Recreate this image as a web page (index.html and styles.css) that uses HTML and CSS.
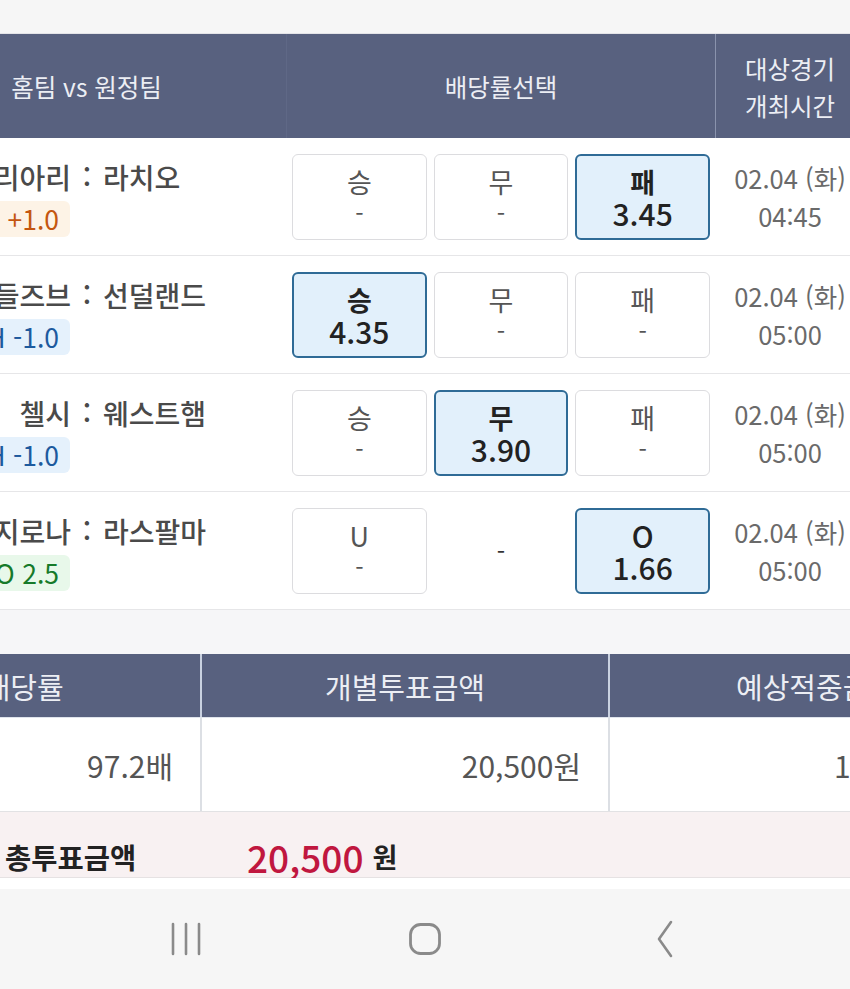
FILE: index.html
```html
<!DOCTYPE html>
<html lang="ko">
<head>
<meta charset="utf-8">
<title>투표 확인</title>
<link rel="stylesheet" href="styles.css">
</head>
<body>
<div class="page">
  <div class="topbar"></div>

  <section class="match-table">
    <div class="mt-head">
      <div class="h-cell h-team">홈팀 vs 원정팀</div>
      <div class="h-cell h-odds">배당률선택</div>
      <div class="h-cell h-time">대상경기<br>개최시간</div>
    </div>

    <div class="mt-row">
      <div class="team">
        <span class="home">칼리아리</span><span class="colon">:</span><span class="away">라치오</span>
        <span class="badge badge-orange">H +1.0</span>
      </div>
      <div class="odds">
        <div class="pick"><span class="lbl">승</span><span class="val">-</span></div>
        <div class="pick"><span class="lbl">무</span><span class="val">-</span></div>
        <div class="pick on"><span class="lbl">패</span><span class="val">3.45</span></div>
      </div>
      <div class="time">02.04 (화)<br>04:45</div>
    </div>

    <div class="mt-row">
      <div class="team">
        <span class="home">미들즈브</span><span class="colon">:</span><span class="away">선덜랜드</span>
        <span class="badge badge-blue">H -1.0</span>
      </div>
      <div class="odds">
        <div class="pick on"><span class="lbl">승</span><span class="val">4.35</span></div>
        <div class="pick"><span class="lbl">무</span><span class="val">-</span></div>
        <div class="pick"><span class="lbl">패</span><span class="val">-</span></div>
      </div>
      <div class="time">02.04 (화)<br>05:00</div>
    </div>

    <div class="mt-row">
      <div class="team">
        <span class="home">첼시</span><span class="colon">:</span><span class="away">웨스트햄</span>
        <span class="badge badge-blue">H -1.0</span>
      </div>
      <div class="odds">
        <div class="pick"><span class="lbl">승</span><span class="val">-</span></div>
        <div class="pick on"><span class="lbl">무</span><span class="val">3.90</span></div>
        <div class="pick"><span class="lbl">패</span><span class="val">-</span></div>
      </div>
      <div class="time">02.04 (화)<br>05:00</div>
    </div>

    <div class="mt-row">
      <div class="team">
        <span class="home">지로나</span><span class="colon">:</span><span class="away">라스팔마</span>
        <span class="badge badge-green">U/O 2.5</span>
      </div>
      <div class="odds">
        <div class="pick"><span class="lbl">U</span><span class="val">-</span></div>
        <div class="pick empty"><span class="val">-</span></div>
        <div class="pick on"><span class="lbl lbl-o">O</span><span class="val">1.66</span></div>
      </div>
      <div class="time">02.04 (화)<br>05:00</div>
    </div>
  </section>

  <div class="spacer"></div>

  <section class="sum-table">
    <div class="s-head">예상배당률</div>
    <div class="s-head">개별투표금액</div>
    <div class="s-head">예상적중금액</div>
    <div class="s-cell">97.2배</div>
    <div class="s-cell">20,500원</div>
    <div class="s-cell">1,992,600원</div>
  </section>

  <div class="total-row">
    <span class="total-label">총투표금액</span>
    <span class="total-amount">20,500</span>
    <span class="total-unit">원</span>
  </div>

  <div class="gap"></div>

  <nav class="navbar">
    <svg class="nav-icon" width="40" height="40" viewBox="0 0 40 40" aria-label="최근 앱">
      <path d="M7 5v30M20 5v30M33 5v30" stroke="#8a8a8a" stroke-width="2.6" stroke-linecap="round" fill="none"/>
    </svg>
    <svg class="nav-icon" width="40" height="40" viewBox="0 0 40 40" aria-label="홈">
      <rect x="5.5" y="5.5" width="29" height="29" rx="10" ry="10" stroke="#8a8a8a" stroke-width="2.8" fill="none"/>
    </svg>
    <svg class="nav-icon" width="40" height="40" viewBox="0 0 40 40" aria-label="뒤로">
      <path d="M27 3L15 20L27 37" stroke="#8a8a8a" stroke-width="2.6" stroke-linecap="round" stroke-linejoin="round" fill="none"/>
    </svg>
  </nav>
</div>
</body>
</html>
```

FILE: styles.css
```css
* { box-sizing: border-box; }

html, body {
  margin: 0;
  padding: 0;
  background: #f6f6f7;
}

body {
  font-family: "Noto Sans CJK KR", "Noto Sans", sans-serif;
  color: #4a4a4a;
}

.page {
  width: 850px;
  height: 989px;
  overflow: hidden;
  display: flex;
  flex-direction: column;
}

.topbar {
  height: 34px;
  flex: none;
  background: #f6f6f6;
  border-bottom: 1px solid #e4e4e8;
}

/* ---------- match table ---------- */
.match-table {
  flex: none;
  margin-left: -113px;
  width: 977px;
  background: #fff;
}

.mt-head,
.mt-row {
  display: grid;
  grid-template-columns: 400px 429px 148px;
}

.mt-head {
  height: 104px;
  background: #58617f;
  color: #eceef4;
  font-size: 24.5px;
}

.h-cell {
  display: flex;
  align-items: center;
  justify-content: center;
  text-align: center;
  line-height: 37px;
}

.h-team { border-right: 1px solid #5f6886; }
.h-odds { border-right: 1px solid #8a93ad; }
.h-time { padding-top: 2px; }

.mt-row {
  height: 118px;
  border-bottom: 1px solid #e6e6e8;
}

.team {
  display: grid;
  grid-template-columns: 1fr auto 1fr;
  grid-template-rows: 34px 36px;
  row-gap: 7px;
  align-content: center;
  column-gap: 10px;
  font-size: 28px;
  font-weight: 500;
  color: #4a4a4a;
  padding-top: 3px;
}

.home { text-align: right; line-height: 34px; white-space: nowrap; }
.away { text-align: left; line-height: 34px; white-space: nowrap; }
.colon { line-height: 32px; width: 12px; text-align: center; }

.badge {
  grid-column: 1;
  grid-row: 2;
  justify-self: end;
  margin-right: 1px;
  height: 36px;
  line-height: 36px;
  padding: 0 11px;
  border-radius: 6px;
  font-size: 26.5px;
  font-weight: 400;
  white-space: nowrap;
}

.badge-orange { background: #fdf3e6; color: #c4560f; }
.badge-blue { background: #e5f1fc; color: #1c5a9e; }
.badge-green { background: #e8f8ea; color: #167a2a; }

.odds {
  display: grid;
  grid-template-columns: repeat(3, 1fr);
  column-gap: 7px;
  padding: 16px 6px 15px 5px;
}

.pick {
  display: flex;
  flex-direction: column;
  align-items: center;
  justify-content: center;
  border: 1px solid #dcdcdf;
  border-radius: 6px;
  background: #fff;
  color: #555;
}

.pick .lbl {
  font-size: 27px;
  line-height: 31px;
}

.pick .val {
  font-size: 24px;
  line-height: 32px;
}

.pick.on {
  background: #e2f0fb;
  border: 2px solid #2f6b96;
  color: #222;
}

.pick.on .lbl { font-weight: 700; }
.pick.on .lbl-o { font-weight: 500; font-size: 29px; }
.pick.on .val { font-size: 30px; font-weight: 500; }

.pick.empty {
  border-color: transparent;
  color: #333;
}

.time {
  display: flex;
  align-items: center;
  justify-content: center;
  text-align: center;
  font-size: 25.5px;
  line-height: 38px;
  color: #6a6a6a;
}

/* ---------- summary ---------- */
.spacer {
  height: 44px;
  flex: none;
  background: #f6f6f8;
}

.sum-table {
  flex: none;
  display: grid;
  grid-template-columns: 408px 408px 412px;
  grid-template-rows: 63px 94px;
  margin-left: -206px;
  width: 1228px;
  background: #fff;
  border-bottom: 1px solid #e2e2e4;
}

.s-head {
  background: #58617f;
  color: #eceef4;
  font-size: 29px;
  display: flex;
  align-items: center;
  justify-content: center;
  border-right: 2px solid #c9d1e0;
}

.s-cell {
  display: flex;
  align-items: center;
  justify-content: flex-end;
  padding-right: 27px;
  font-size: 30px;
  color: #555;
  border-right: 2px solid #dcdfe4;
  border-top: 1px solid #dfe4ec;
}

.s-head:nth-child(3), .s-cell:nth-child(6) { border-right: 0; }

.total-row {
  flex: none;
  height: 66px;
  background: #f8f1f2;
  border-bottom: 1px solid #e6e2e3;
  display: flex;
  align-items: flex-end;
  padding: 0 0 0 5px;
}

.total-label {
  width: 242px;
  font-size: 28.5px;
  font-weight: 700;
  color: #222;
  line-height: 40px;
}

.total-amount {
  font-size: 37px;
  font-weight: 500;
  color: #c0173f;
  line-height: 40px;
}

.total-unit {
  margin-left: 9px;
  font-size: 27px;
  font-weight: 700;
  color: #222;
  line-height: 40px;
}

.gap {
  height: 11px;
  flex: none;
  background: #fff;
}

.navbar {
  flex: 1;
  background: #f6f6f6;
  display: flex;
  align-items: center;
  justify-content: center;
  gap: 199px;
}

.nav-icon { display: block; }
```
